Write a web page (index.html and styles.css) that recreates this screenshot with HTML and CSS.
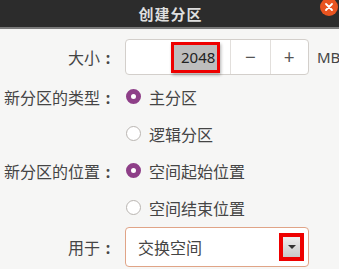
FILE: index.html
```html
<!DOCTYPE html>
<html lang="zh">
<head>
    <meta charset="UTF-8">
    <title>创建分区</title>
    <link rel="stylesheet" href="styles.css">
</head>
<body>
    <div class="titlebar">
        <span class="title">创建分区</span>
        <span class="close">
            <svg width="10" height="10" viewBox="0 0 10 10"><path d="M2 2L8 8M8 2L2 8" stroke="#fff" stroke-width="1.8" stroke-linecap="round"/></svg>
        </span>
    </div>
    <div class="form">
        <div class="row row-size">
            <div class="label">大小</div>
            <div class="spin">
                <div class="entry"><span class="mark">2048</span></div>
                <div class="btn">−</div>
                <div class="btn">+</div>
            </div>
            <span class="unit">MB</span>
        </div>
        <div class="row">
            <div class="label">新分区的类型</div>
            <label class="radio"><span class="dot on"></span>主分区</label>
        </div>
        <div class="row">
            <div class="label empty"></div>
            <label class="radio"><span class="dot"></span>逻辑分区</label>
        </div>
        <div class="row">
            <div class="label">新分区的位置</div>
            <label class="radio"><span class="dot on"></span>空间起始位置</label>
        </div>
        <div class="row">
            <div class="label empty"></div>
            <label class="radio"><span class="dot"></span>空间结束位置</label>
        </div>
        <div class="row row-use">
            <div class="label">用于</div>
            <div class="combo">
                <span>交换空间</span>
                <span class="arrow"><span class="tri"></span></span>
            </div>
        </div>
    </div>
</body>
</html>
```

FILE: styles.css
```css
*{padding:0; margin:0; box-sizing:border-box;}

body{
    width:339px;
    height:269px;
    overflow:hidden;
    background:#f6f6f5;
    font-family:"Noto Sans CJK SC", sans-serif;
    font-size:16px;
    color:#454545;
}

/* 제목줄 */
.titlebar{
    position:relative;
    height:29px;
    background:#2c2c2c;
    border-bottom:2px solid #7b7b7b;
    display:flex;
    align-items:center;
    justify-content:center;
}
.titlebar .title{
    color:#dedede;
    font-weight:bold;
    font-size:15px;
    letter-spacing:1px;
    margin-left:2px;
}
.titlebar .close{
    position:absolute;
    left:320px;
    top:-2px;
    width:18px;
    height:18px;
    border-radius:50%;
    background:#e95420;
    display:flex;
    align-items:center;
    justify-content:center;
}

.form{padding-top:10px;}

.row{
    display:flex;
    align-items:center;
    height:37px;
}
.row .label{
    width:116px;
    text-align:right;
    flex:none;
    margin-right:9px;
}
/* 콜론은 칸 가운데에 */
.row .label::after{
    content:":";
    display:inline-block;
    width:16px;
    text-align:center;
    font-family:"Noto Sans", sans-serif;
    font-weight:bold;
}
.row .label.empty::after{content:"";}

.row-size{height:36px; margin-bottom:3px;}
.row-use{height:40px; margin-top:1px;}

/* 숫자 입력 */
.spin{
    display:flex;
    flex:none;
    width:184px;
    height:36px;
    background:#fff;
    border:1px solid #d3cfcb;
    border-radius:4px;
}
.spin .entry{
    width:106px;
    display:flex;
    align-items:center;
    padding-left:45px;
    border-right:1px solid #e2dfdc;
}
.spin .mark{
    border:3px solid #ee0000;
    background:#bdbdbd;
    width:49px;
    height:31px;
    line-height:24px;
    font-family:"Noto Sans", sans-serif;
    font-size:15px;
    color:#222;
    padding-left:7px;
    box-shadow:1px 2px 3px rgba(0,0,0,.3);
}
.spin .btn{
    width:39px;
    display:flex;
    align-items:center;
    justify-content:center;
    font-family:"Noto Sans", sans-serif;
    font-size:19px;
    color:#555;
}
.spin .btn + .btn{border-left:1px solid #e2dfdc;}
.unit{
    margin-left:8px;
    font-family:"Noto Sans", sans-serif;
    font-size:15px;
    white-space:nowrap;
}

/* 라디오 */
.radio{display:flex; align-items:center; margin-left:1px;}
.radio .dot{
    width:15px;
    height:15px;
    border-radius:50%;
    border:1px solid #b9b5b1;
    background:#fff;
    margin-right:8px;
}
.radio .dot.on{
    background:#fff;
    border:5px solid #8e3f88;
}

/* 콤보 */
.combo{
    width:184px;
    height:40px;
    background:#fff;
    border:1px solid #e0a487;
    border-radius:4px;
    display:flex;
    align-items:center;
    justify-content:space-between;
    padding-left:12px;
    padding-right:4px;
}
.combo .arrow{
    width:25px;
    height:28px;
    border:4px solid #ee0000;
    background:linear-gradient(#eeeeee,#c9c9c9);
    display:flex;
    align-items:center;
    justify-content:center;
}
.combo .tri{
    width:0;
    height:0;
    border-left:4px solid transparent;
    border-right:4px solid transparent;
    border-top:4px solid #333;
}
```
